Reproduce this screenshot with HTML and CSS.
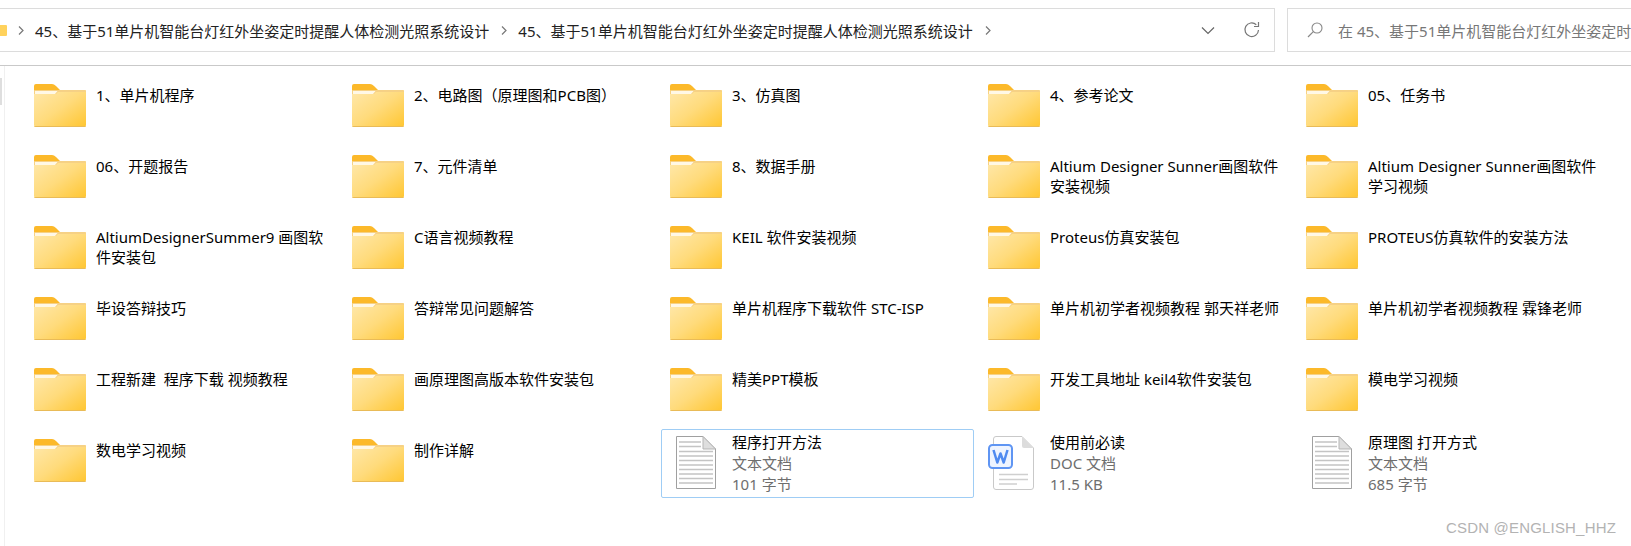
FILE: index.html
```html
<!DOCTYPE html>
<html lang="zh-CN">
<head>
<meta charset="utf-8">
<title>资源管理器</title>
<link rel="stylesheet" href="styles.css">
</head>
<body>
<svg class="defs" width="0" height="0" aria-hidden="true">
  <defs>
    <linearGradient id="fg" x1="0" y1="0" x2="1" y2="1">
      <stop offset="0" stop-color="#ffe8ab"/>
      <stop offset="0.5" stop-color="#ffdb7c"/>
      <stop offset="1" stop-color="#ffc631"/>
    </linearGradient>
    <symbol id="folder" viewBox="0 0 52 43">
      <path d="M2 0H18Q20 0 22 2L26 6H50Q52 6 52 8V20H0V2Q0 0 2 0Z" fill="#fcb92a"/>
      <path d="M1.500 6H50.500Q52 6 52 7.500V41Q52 43 50 43H2Q0 43 0 41V7.500Q0 6 1.500 6Z" fill="url(#fg)"/>
      <path d="M1.500 6H50.500Q52 6 52 7.500V8H24L22 10H0V7.500Q0 6 1.500 6Z" fill="#f6d185"/>
      <path d="M1 7H23.500L21 10H1Z" fill="#fff8e6"/>
      <path d="M0 42H52Q52 43 50 43H2Q0 43 0 42Z" fill="#e9bb58"/>
    </symbol>
    <symbol id="txt" viewBox="0 0 40 53">
      <path d="M.5.5H27L39.500 13V52.500H.5Z" fill="#fff" stroke="#a0a0a0"/>
      <path d="M27 .5V13H39.500Z" fill="#dedede" stroke="#b5b5b5"/>
      <g stroke="#c4c4c4" stroke-width="1.400">
        <path d="M3 6H25M3 10.500H25M3 15.500H37M3 20H37M3 24.500H37M3 29H37M3 33.500H37M3 38H37M3 42.500H37M3 47H37"/>
      </g>
    </symbol>
    <symbol id="doc" viewBox="0 0 46 54">
      <path d="M5.500 3Q5.500 .5 8 .5H34L45.500 12V51Q45.500 53.500 43 53.500H8Q5.500 53.500 5.500 51Z" fill="#fff" stroke="#c9c9c9"/>
      <path d="M34 .5L45.500 12H36Q34 12 34 10Z" fill="#dcdcdc"/>
      <path d="M11 38.500H40M11 43.500H40M11 48H29" stroke="#cfcfcf" stroke-width="1.300" fill="none"/>
      <rect x="1" y="9" width="23" height="23" rx="3.500" fill="#eef4ff" stroke="#5f95f3" stroke-width="2"/>
      <path d="M5.500 14L9.300 26.500L12.500 17.500L15.700 26.500L19.500 14" fill="none" stroke="#4f8af0" stroke-width="2.500" stroke-linejoin="round"/>
    </symbol>
  </defs>
</svg>

<header class="toolbar">
  <div class="address">
    <svg class="crumb-folder" width="25" height="11" viewBox="0 0 25 11"><rect width="25" height="11" rx="1" fill="#ffd25c"/></svg>
    <svg class="chev"><path d="M2 1.500L6 5.500L2 9.500" fill="none" stroke="#777" stroke-width="1.200"/></svg>
    <span class="crumb">45、基于51单片机智能台灯红外坐姿定时提醒人体检测光照系统设计</span>
    <svg class="chev"><path d="M2 1.500L6 5.500L2 9.500" fill="none" stroke="#777" stroke-width="1.200"/></svg>
    <span class="crumb">45、基于51单片机智能台灯红外坐姿定时提醒人体检测光照系统设计</span>
    <svg class="chev"><path d="M2 1.500L6 5.500L2 9.500" fill="none" stroke="#777" stroke-width="1.200"/></svg>
    <span class="spacer"></span>
    <svg class="drop" width="14" height="9" viewBox="0 0 14 9"><path d="M1 1.500L7 7.500L13 1.500" fill="none" stroke="#666" stroke-width="1.200"/></svg>
    <svg class="refresh" width="18" height="18" viewBox="0 0 18 18"><path d="M15.500 9A6.800 6.800 0 1 1 13.300 3.700" fill="none" stroke="#777" stroke-width="1.200"/><path d="M15.500 1V5.500H11" fill="none" stroke="#777" stroke-width="1.200"/></svg>
  </div>
  <div class="search">
    <svg class="lens" width="16" height="16" viewBox="0 0 16 16"><circle cx="10" cy="6" r="5" fill="none" stroke="#888" stroke-width="1.100"/><path d="M6.300 9.700L1 15" stroke="#888" stroke-width="1.200"/></svg>
    <span class="search-text">在 45、基于51单片机智能台灯红外坐姿定时</span>
  </div>
</header>

<main class="content">
  <div class="scroll-mark"></div>
  <div class="grid">
    <div class="item"><svg class="ficon"><use href="#folder"/></svg><span class="name">1、单片机程序</span></div>
    <div class="item"><svg class="ficon"><use href="#folder"/></svg><span class="name">2、电路图（原理图和PCB图）</span></div>
    <div class="item"><svg class="ficon"><use href="#folder"/></svg><span class="name">3、仿真图</span></div>
    <div class="item"><svg class="ficon"><use href="#folder"/></svg><span class="name">4、参考论文</span></div>
    <div class="item"><svg class="ficon"><use href="#folder"/></svg><span class="name">05、任务书</span></div>

    <div class="item"><svg class="ficon"><use href="#folder"/></svg><span class="name">06、开题报告</span></div>
    <div class="item"><svg class="ficon"><use href="#folder"/></svg><span class="name">7、元件清单</span></div>
    <div class="item"><svg class="ficon"><use href="#folder"/></svg><span class="name">8、数据手册</span></div>
    <div class="item"><svg class="ficon"><use href="#folder"/></svg><span class="name">Altium Designer Sunner画图软件安装视频</span></div>
    <div class="item"><svg class="ficon"><use href="#folder"/></svg><span class="name">Altium Designer Sunner画图软件学习视频</span></div>

    <div class="item"><svg class="ficon"><use href="#folder"/></svg><span class="name">AltiumDesignerSummer9 画图软件安装包</span></div>
    <div class="item"><svg class="ficon"><use href="#folder"/></svg><span class="name">C语言视频教程</span></div>
    <div class="item"><svg class="ficon"><use href="#folder"/></svg><span class="name">KEIL 软件安装视频</span></div>
    <div class="item"><svg class="ficon"><use href="#folder"/></svg><span class="name">Proteus仿真安装包</span></div>
    <div class="item"><svg class="ficon"><use href="#folder"/></svg><span class="name">PROTEUS仿真软件的安装方法</span></div>

    <div class="item"><svg class="ficon"><use href="#folder"/></svg><span class="name">毕设答辩技巧</span></div>
    <div class="item"><svg class="ficon"><use href="#folder"/></svg><span class="name">答辩常见问题解答</span></div>
    <div class="item"><svg class="ficon"><use href="#folder"/></svg><span class="name">单片机程序下载软件 STC-ISP</span></div>
    <div class="item"><svg class="ficon"><use href="#folder"/></svg><span class="name">单片机初学者视频教程 郭天祥老师</span></div>
    <div class="item"><svg class="ficon"><use href="#folder"/></svg><span class="name">单片机初学者视频教程 霖锋老师</span></div>

    <div class="item"><svg class="ficon"><use href="#folder"/></svg><span class="name">工程新建&nbsp;&nbsp;程序下载 视频教程</span></div>
    <div class="item"><svg class="ficon"><use href="#folder"/></svg><span class="name">画原理图高版本软件安装包</span></div>
    <div class="item"><svg class="ficon"><use href="#folder"/></svg><span class="name">精美PPT模板</span></div>
    <div class="item"><svg class="ficon"><use href="#folder"/></svg><span class="name">开发工具地址 keil4软件安装包</span></div>
    <div class="item"><svg class="ficon"><use href="#folder"/></svg><span class="name">模电学习视频</span></div>

    <div class="item"><svg class="ficon"><use href="#folder"/></svg><span class="name">数电学习视频</span></div>
    <div class="item"><svg class="ficon"><use href="#folder"/></svg><span class="name">制作详解</span></div>
    <div class="item file selected">
      <svg class="txticon"><use href="#txt"/></svg>
      <div class="meta"><span class="title">程序打开方法</span><span class="sub">文本文档</span><span class="sub">101 字节</span></div>
    </div>
    <div class="item file">
      <svg class="docicon"><use href="#doc"/></svg>
      <div class="meta"><span class="title">使用前必读</span><span class="sub">DOC 文档</span><span class="sub">11.5 KB</span></div>
    </div>
    <div class="item file">
      <svg class="txticon"><use href="#txt"/></svg>
      <div class="meta"><span class="title">原理图 打开方式</span><span class="sub">文本文档</span><span class="sub">685 字节</span></div>
    </div>
  </div>
  <div class="watermark">CSDN @ENGLISH_HHZ</div>
</main>
</body>
</html>
```

FILE: styles.css
```css
* { box-sizing: border-box; }
html, body { margin: 0; padding: 0; }
body {
  width: 1631px;
  height: 546px;
  overflow: hidden;
  background: #fff;
  color: #000;
  font-family: "Noto Sans", "Noto Sans CJK SC", sans-serif;
  font-size: 15px;
  position: relative;
}
.defs { position: absolute; }

.toolbar {
  height: 66px;
  padding-top: 8px;
  border-bottom: 1px solid #c9c9c9;
  display: flex;
  gap: 12px;
  overflow: hidden;
}
.address, .search {
  height: 44px;
  border: 1px solid #dcdcdc;
  display: flex;
  align-items: center;
  flex: none;
  white-space: nowrap;
}
.address {
  width: 1276px;
  margin-left: -1px;
  border-left: none;
}
.crumb-folder { flex: none; margin-left: -17px; }
.chev { width: 8px; height: 11px; flex: none; margin: 0 10px 0 10px; }
.crumb { color: #222; }
.crumb + .chev { margin: 0 10px 0 11px; }
.spacer { flex: 1; }
.drop { margin-right: 28px; }
.refresh { margin-right: 13px; }

.search {
  width: 400px;
  padding-left: 19px;
}
.lens { flex: none; margin-right: 15px; }
.search-text { color: #777; }

.content {
  position: relative;
  height: 480px;
  padding: 8px 0 0 25px;
}
.content::before {
  content: "";
  position: absolute;
  left: 4px;
  top: 0;
  bottom: 0;
  width: 1px;
  background: #f0f0f0;
}
.scroll-mark {
  position: absolute;
  left: 0;
  top: 12px;
  width: 2px;
  height: 27px;
  background: #dedede;
}
.grid {
  display: grid;
  grid-template-columns: repeat(5, 313px);
  grid-auto-rows: 69px;
  column-gap: 5px;
  row-gap: 2px;
}
.item {
  display: flex;
  align-items: flex-start;
  padding: 9px 0 0 8px;
  border: 1px solid transparent;
  border-radius: 2px;
}
.ficon { width: 52px; height: 43px; flex: none; margin-right: 10px; }
.name {
  width: 238px;
  line-height: 20px;
  margin-top: 1px;
}
.file { padding: 6px 0 0 14px; }
.selected { border-color: #9fcdf5; }
.txticon { width: 40px; height: 53px; flex: none; margin-right: 16px; }
.docicon { width: 46px; height: 54px; flex: none; margin-left: -6px; margin-right: 16px; }
.meta { display: flex; flex-direction: column; margin-top: -4px; }
.title { line-height: 21px; color: #000; }
.sub { line-height: 21px; color: #6e6e6e; }
.watermark {
  position: absolute;
  right: 15px;
  top: 453px;
  font-family: "Liberation Sans", sans-serif;
  font-size: 15px;
  letter-spacing: .18px;
  color: #b3b3b3;
}
```
